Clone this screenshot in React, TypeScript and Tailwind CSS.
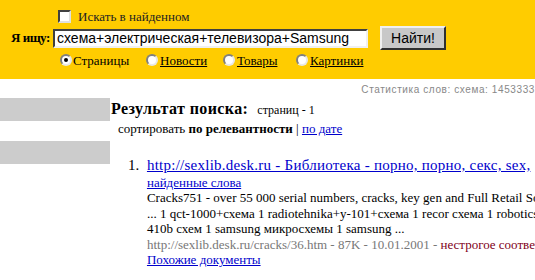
import React from "react";

const serif = { fontFamily: '"Liberation Serif", "Times New Roman", serif' };
const sans = { fontFamily: '"Liberation Sans", Arial, sans-serif' };

function Radio({ checked }: { checked?: boolean }) {
  return (
    <span className="relative inline-block w-[12px] h-[12px] rounded-full bg-white border-2 border-t-[#808080] border-l-[#808080] border-r-[#e8e8e8] border-b-[#e8e8e8] mr-[1px] shrink-0">
      {checked && (
        <span className="absolute left-[2px] top-[2px] w-[4px] h-[4px] rounded-full bg-black" />
      )}
    </span>
  );
}

export default function App() {
  return (
    <div className="w-[535px] h-[280px] overflow-hidden bg-white text-black" style={serif}>
      <div className="h-[79px] bg-[#ffcc00] pt-[9px]">
        <div className="flex items-center h-[14px] pl-[58px]">
          <span className="inline-block w-[13px] h-[13px] bg-white border-2 border-t-[#404040] border-l-[#404040] border-r-[#e0e0e0] border-b-[#e0e0e0]" />
          <span className="ml-[7px] text-[13px] leading-none text-[#222]">Искать в найденном</span>
        </div>
        <div className="flex items-center mt-[3px] h-[24px]">
          <span className="ml-[11px] w-[42px] text-[13px] font-bold tracking-[-0.5px]">Я ищу:</span>
          <div
            className="w-[315px] h-[19px] bg-white border-2 border-t-[#404040] border-l-[#404040] border-r-[#f0f0f0] border-b-[#f0f0f0] flex items-center pl-[2px] text-[14px] leading-none whitespace-nowrap overflow-hidden"
            style={sans}
          >
            схема+электрическая+телевизора+Samsung
          </div>
          <div
            className="ml-[12px] w-[66px] h-[24px] bg-[#c8c8c8] border-2 border-t-[#f0f0f0] border-l-[#f0f0f0] border-r-[#303030] border-b-[#303030] flex items-center justify-center text-[14px] leading-none"
            style={sans}
          >
            Найти!
          </div>
        </div>
        <div className="flex items-center mt-[3px] h-[14px] text-[13px] leading-none">
          <div className="flex items-center pl-[60px] w-[146px]">
            <Radio checked />
            <span>Страницы</span>
          </div>
          <div className="flex items-center w-[77px]">
            <Radio />
            <span className="underline ml-[1px]">Новости</span>
          </div>
          <div className="flex items-center w-[73px]">
            <Radio />
            <span className="underline ml-[1px]">Товары</span>
          </div>
          <div className="flex items-center">
            <Radio />
            <span className="underline ml-[1px]">Картинки</span>
          </div>
        </div>
      </div>

      <div className="flex justify-end h-[16px] items-end">
        <span className="text-[10px] text-[#888] tracking-[0.6px] leading-none whitespace-nowrap" style={sans}>
          Статистика слов: схема: 1453333
        </span>
      </div>

      <div className="flex">
        <div className="w-[110px] shrink-0 flex flex-col">
          <div className="h-[23px] mt-[3px] bg-[#cccccc]" />
          <div className="h-[23px] mt-[20px] bg-[#cccccc]" />
        </div>
        <div className="flex-1 min-w-0">
          <div className="flex items-baseline mt-[5px] pl-[1px] whitespace-nowrap leading-[18px]">
            <span className="text-[16px] font-bold tracking-[0.4px]">Результат поиска:</span>
            <span className="ml-[9px] text-[12px]">страниц - 1</span>
          </div>
          <div className="mt-[2px] pl-[8px] text-[13px] leading-[15px] whitespace-nowrap">
            сортировать <b>по релевантности</b> | <span className="underline text-[#0000cc]">по дате</span>
          </div>
          <div className="flex mt-[19px] whitespace-nowrap">
            <span className="w-[39px] pl-[18px] text-[15px] leading-[20px]">1.</span>
            <div className="min-w-0">
              <div className="text-[15px] leading-[20px] tracking-[0.25px] underline text-[#0000cc]">
                http://sexlib.desk.ru - Библиотека - порно, порно, секс, sex,
              </div>
              <div className="text-[13px] leading-[15px] underline text-[#0000cc]">найденные слова</div>
              <div className="text-[13px] leading-[15.5px]">
                Cracks751 - over 55 000 serial numbers, cracks, key gen and Full Retail Software
              </div>
              <div className="text-[13px] leading-[15.5px]">
                ... 1 qct-1000+схема 1 radiotehnika+y-101+схема 1 recor схема 1 robotics+схема
              </div>
              <div className="text-[13px] leading-[15.5px]">410b схем 1 samsung микросхемы 1 samsung ...</div>
              <div className="text-[13px] leading-[15.5px] text-[#777]">
                http://sexlib.desk.ru/cracks/36.htm - 87K - 10.01.2001 -{" "}
                <span className="text-[#800020]">нестрогое соответствие</span>
              </div>
              <div className="text-[13px] leading-[15.5px] underline text-[#0000cc]">Похожие документы</div>
            </div>
          </div>
        </div>
      </div>
    </div>
  );
}
